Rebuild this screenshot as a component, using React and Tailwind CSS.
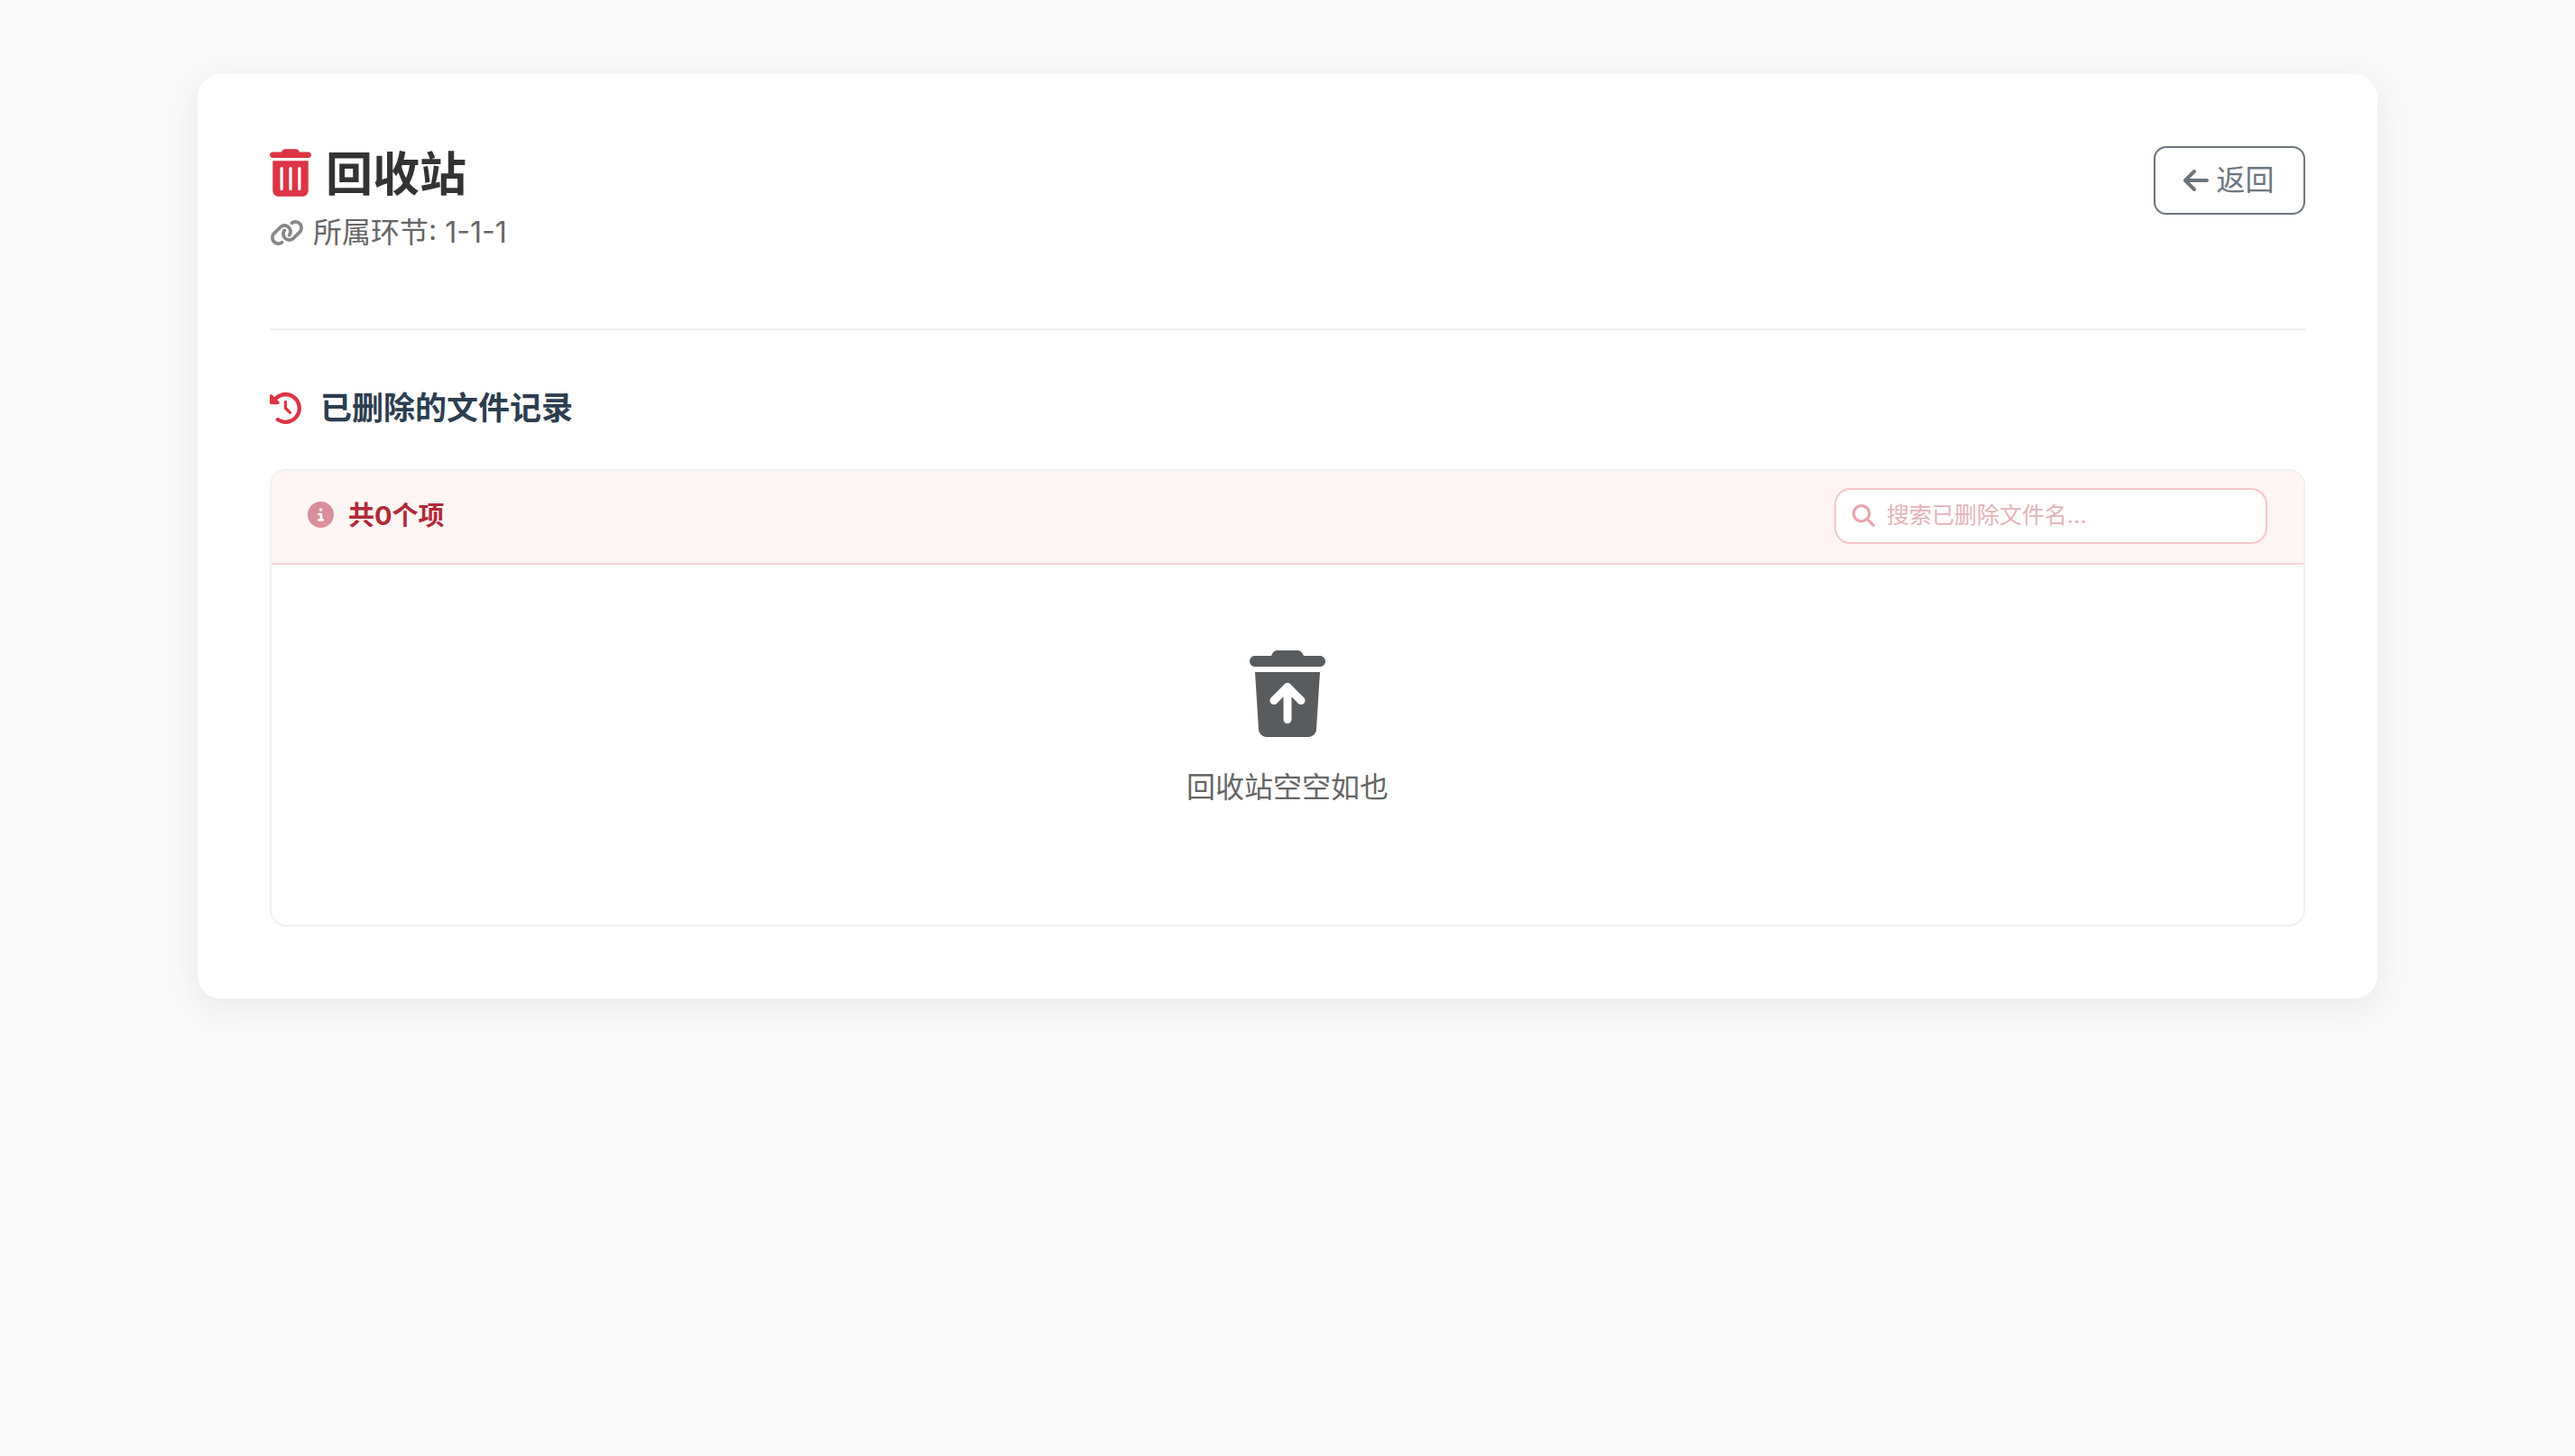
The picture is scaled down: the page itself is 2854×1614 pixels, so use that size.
import React from 'react';
import {
  FaTrashCan,
  FaTrashArrowUp,
  FaLink,
  FaClockRotateLeft,
  FaCircleInfo,
  FaMagnifyingGlass,
  FaArrowLeft,
} from 'react-icons/fa6';

const fontStack = "font-['Inter','Noto_Sans_CJK_SC',sans-serif]";

const App = () => {
  return (
    <div className={`min-h-screen bg-[#f8f9fa] pt-[82px] ${fontStack}`}>
      <div className="mx-auto w-[2416px] h-[1025px] bg-white rounded-[26px] shadow-[0_9px_36px_rgba(0,0,0,0.07)] px-[80px] pt-[80px]">
        {/* header */}
        <div className="flex justify-between items-start h-[204px] border-b-2 border-[#eeeeee]">
          <div className="pt-[4px]">
            <div className="flex items-center h-[56px]">
              <FaTrashCan className="w-[46px] h-[53px] mb-[6px] text-[#dc3545]" />
              <h1 className="ml-[16px] text-[52px] leading-[56px] font-bold text-[#333333]">回收站</h1>
            </div>
            <div className="flex items-center mt-[16px] h-[40px] text-[32px] text-[#666666]">
              <FaLink className="w-[38px] h-[32px] text-[#888888]" />
              <span className="ml-[10px]">所属环节: 1-1-1</span>
            </div>
          </div>
          <button className="flex items-center justify-center w-[168px] h-[76px] pr-[3px] border-2 border-[#6c757d] rounded-[14px] text-[32px] text-[#6c757d]">
            <FaArrowLeft className="w-[32px] h-[32px] mr-[6px]" />
            返回
          </button>
        </div>

        {/* section title */}
        <div className="flex items-center mt-[66px] h-[40px]">
          <FaClockRotateLeft className="w-[35px] h-[35px] text-[#dc3545]" />
          <h2 className="ml-[21px] text-[35px] leading-[40px] font-bold text-[#2c3e50]">已删除的文件记录</h2>
        </div>

        {/* list panel */}
        <div className="mt-[48px] h-[507px] border-2 border-[#f0f0f0] rounded-[18px] overflow-hidden">
          <div className="flex items-center justify-between h-[104px] pb-[3px] px-[40px] bg-[#fff5f5] border-b-2 border-[#f8d7da]">
            <div className="flex items-center">
              <FaCircleInfo className="w-[29px] h-[29px] mb-[3px] text-[#d98f9b]" />
              <span className="ml-[16px] text-[29px] font-bold text-[#b02a37]">共0个项</span>
            </div>
            <div className="flex items-center w-[480px] h-[62px] bg-white border-2 border-[#f5c6cb] rounded-[18px] px-[18px]">
              <FaMagnifyingGlass className="w-[25px] h-[25px] shrink-0 text-[#e8a5ad]" />
              <input
                placeholder="搜索已删除文件名..."
                className="ml-[13px] w-full text-[25px] outline-none placeholder:text-[#e3b3b9]"
              />
            </div>
          </div>
          <div className="flex flex-col items-center pt-[95px]">
            <FaTrashArrowUp className="w-[84px] h-[96px] text-[#595c5f]" />
            <p className="mt-[34px] text-[32px] leading-[44px] text-[#666666]">回收站空空如也</p>
          </div>
        </div>
      </div>
    </div>
  );
};

export default App;
